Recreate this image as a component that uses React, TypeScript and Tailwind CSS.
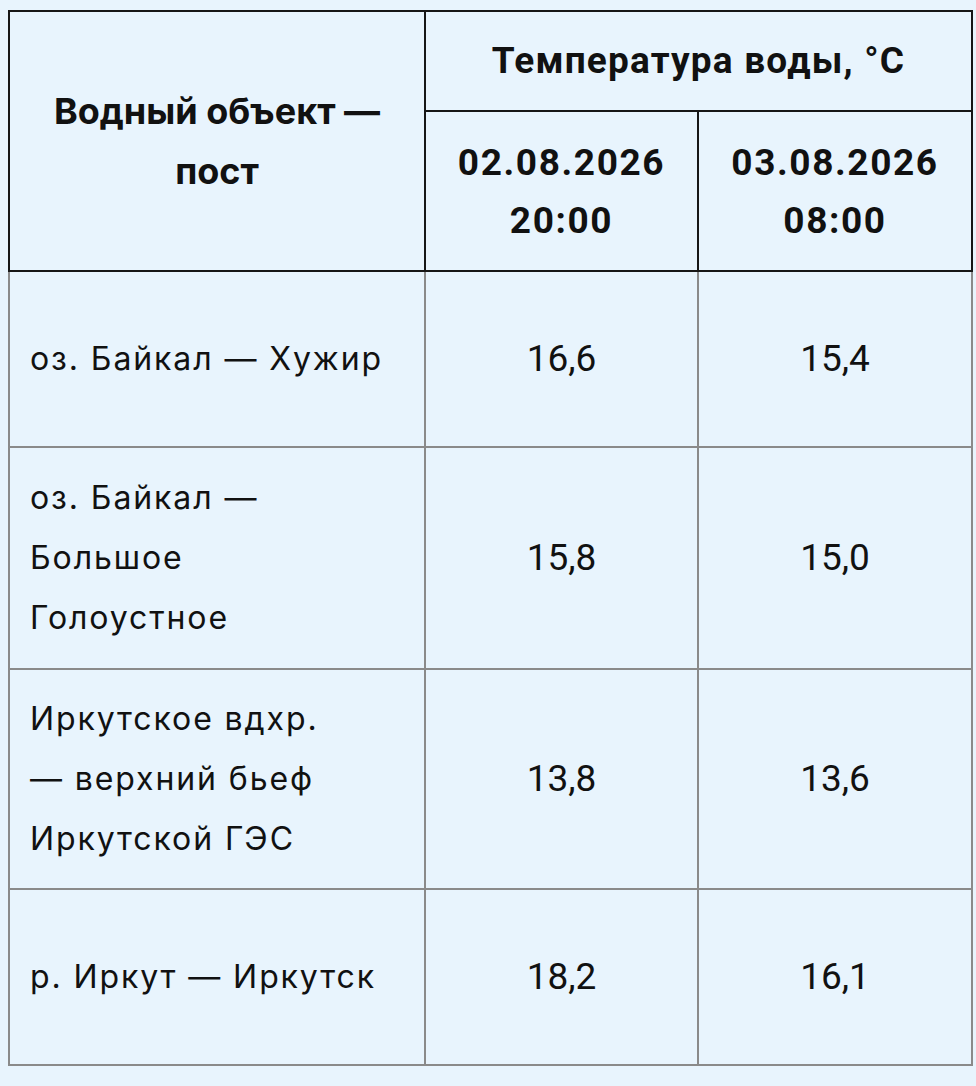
import React from "react";

type Row = { name: string[]; a: string; b: string; h: string };

const rows: Row[] = [
  { name: ["оз. Байкал — Хужир"], a: "16,6", b: "15,4", h: "h-[176px]" },
  { name: ["оз. Байкал —", "Большое", "Голоустное"], a: "15,8", b: "15,0", h: "h-[222px]" },
  { name: ["Иркутское вдхр.", "— верхний бьеф", "Иркутской ГЭС"], a: "13,8", b: "13,6", h: "h-[220px]" },
  { name: ["р. Иркут — Иркутск"], a: "18,2", b: "16,1", h: "h-[176px]" },
];

const sans = "font-['Inter','Noto_Sans',sans-serif]";
const din = "font-['Roboto','Liberation_Sans',sans-serif]";

export default function App() {
  return (
    <div className="min-h-screen w-[976px] bg-[#e8f4fd] pl-[8px] pt-[10px] text-[#111]">
      <table className="w-[963px] border-collapse table-fixed">
        <colgroup>
          <col className="w-[416px]" />
          <col className="w-[273px]" />
          <col className="w-[274px]" />
        </colgroup>
        <thead>
          <tr className="h-[100px]">
            <th
              rowSpan={2}
              className={`${sans} border-2 border-[#161616] px-1 text-center align-middle text-[36px] font-bold leading-[60px]`}
            >
              Водный объект —<br />пост
            </th>
            <th
              colSpan={2}
              className={`${din} border-2 border-[#161616] text-center align-middle text-[37px] font-bold tracking-[1.2px] leading-[60px]`}
            >
              Температура воды, °С
            </th>
          </tr>
          <tr className="h-[160px]">
            <th className={`${din} border-2 border-[#161616] pt-[2px] text-center align-middle text-[37px] font-bold tracking-[1.6px] leading-[58px]`}>
              02.08.2026
              <br />
              20:00
            </th>
            <th className={`${din} border-2 border-[#161616] pt-[2px] text-center align-middle text-[37px] font-bold tracking-[1.6px] leading-[58px]`}>
              03.08.2026
              <br />
              08:00
            </th>
          </tr>
        </thead>
        <tbody>
          {rows.map((r) => (
            <tr key={r.a} className={r.h}>
              <td className={`${sans} border-2 border-[#8a8a8a] pl-[20px] align-middle text-[32px] tracking-[1.9px] leading-[60px]`}>
                {r.name.map((l, i) => (
                  <div key={i}>{l}</div>
                ))}
              </td>
              <td className={`${din} border-2 border-[#8a8a8a] text-center align-middle text-[37px] leading-[60px]`}>
                {r.a}
              </td>
              <td className={`${din} border-2 border-[#8a8a8a] text-center align-middle text-[37px] leading-[60px]`}>
                {r.b}
              </td>
            </tr>
          ))}
        </tbody>
      </table>
    </div>
  );
}
